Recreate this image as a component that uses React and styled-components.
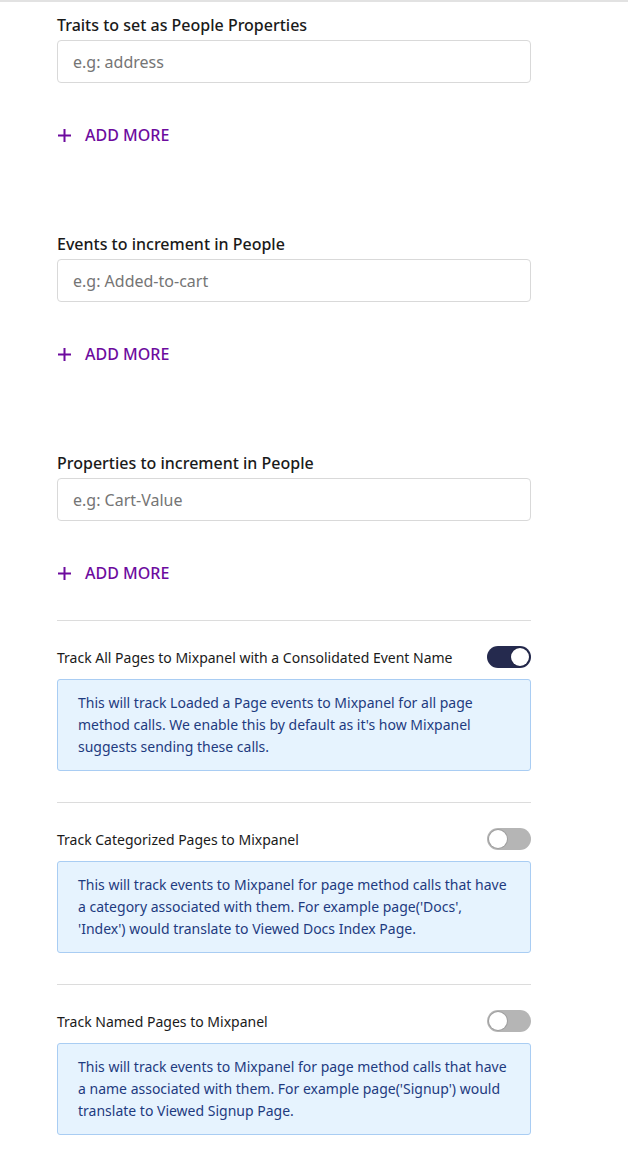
import React from "react";
import styled, { createGlobalStyle } from "styled-components";

const GlobalStyle = createGlobalStyle`
  body {
    margin: 0;
    background: #fff;
    font-family: "Noto Sans", "Open Sans", sans-serif;
  }
`;

const Page = styled.div`
  width: 628px;
  min-height: 1150px;
  border-top: 2px solid #e2e2e2;
  box-sizing: border-box;
`;

const Content = styled.div`
  width: 474px;
  margin-left: 57px;
  padding-top: 11px;
`;

const Field = styled.div`
  display: flex;
  flex-direction: column;
  margin-bottom: ${(p) => (p.$last ? "35px" : "85px")};
`;

const Label = styled.div`
  font-size: 16px;
  font-weight: 500;
  line-height: 24px;
  color: #1a1a1a;
  margin-bottom: 3px;
`;

const Input = styled.input`
  box-sizing: border-box;
  height: 43px;
  width: 100%;
  border: 1px solid #d9d9d9;
  border-radius: 4px;
  padding: 0 15px;
  font-family: inherit;
  font-size: 16px;
  color: #333;
  outline: none;
  &::placeholder {
    color: #757575;
  }
`;

const AddMore = styled.button`
  display: flex;
  align-items: center;
  gap: 13px;
  margin-top: 40px;
  padding: 0;
  border: none;
  background: none;
  color: #6d0b9e;
  font-family: inherit;
  font-size: 16px;
  font-weight: 500;
  line-height: 24px;
  cursor: pointer;
  height: 24px;
`;

const Divider = styled.hr`
  border: none;
  border-top: 1px solid #dcdcdc;
  margin: 0;
`;

const Setting = styled.div`
  padding: 25px 0 31px;
`;

const SettingRow = styled.div`
  display: flex;
  align-items: center;
  justify-content: space-between;
  height: 22px;
  margin-bottom: 11px;
`;

const SettingLabel = styled.div`
  font-size: 14px;
  color: #1a1a1a;
`;

const Toggle = styled.div`
  position: relative;
  width: 44px;
  height: 22px;
  border-radius: 11px;
  background: ${(p) => (p.$on ? "#252a4e" : "#b5b5b5")};
  box-sizing: border-box;
`;

const Knob = styled.div`
  position: absolute;
  top: 2px;
  left: ${(p) => (p.$on ? "24px" : "2px")};
  width: 18px;
  height: 18px;
  border-radius: 50%;
  background: #fff;
  box-shadow: 0 0 0 1px rgba(0, 0, 0, 0.12);
`;

const InfoBox = styled.div`
  box-sizing: border-box;
  background: #e6f3fe;
  border: 1px solid #a9cdf3;
  border-radius: 3px;
  padding: 12px 20px 12px;
  font-size: 14px;
  line-height: 22px;
  color: #1e3b80;
`;

const PlusIcon = () => (
  <svg width="15" height="15" viewBox="0 0 15 15">
    <path d="M7.5 1v13M1 7.5h13" stroke="#6d0b9e" strokeWidth="2" />
  </svg>
);

const fields = [
  { label: "Traits to set as People Properties", placeholder: "e.g: address" },
  { label: "Events to increment in People", placeholder: "e.g: Added-to-cart" },
  { label: "Properties to increment in People", placeholder: "e.g: Cart-Value" },
];

const settings = [
  {
    label: "Track All Pages to Mixpanel with a Consolidated Event Name",
    on: true,
    text: "This will track Loaded a Page events to Mixpanel for all page method calls. We enable this by default as it's how Mixpanel suggests sending these calls.",
  },
  {
    label: "Track Categorized Pages to Mixpanel",
    on: false,
    text: "This will track events to Mixpanel for page method calls that have a category associated with them. For example page('Docs', 'Index') would translate to Viewed Docs Index Page.",
  },
  {
    label: "Track Named Pages to Mixpanel",
    on: false,
    text: "This will track events to Mixpanel for page method calls that have a name associated with them. For example page('Signup') would translate to Viewed Signup Page.",
  },
];

const ListField = ({ label, placeholder, last }) => (
  <Field $last={last}>
    <Label>{label}</Label>
    <Input placeholder={placeholder} />
    <AddMore>
      <PlusIcon />
      ADD MORE
    </AddMore>
  </Field>
);

const App = () => {
  return (
    <Page>
      <GlobalStyle />
      <Content>
        {fields.map((f, i) => (
          <ListField key={f.label} {...f} last={i === fields.length - 1} />
        ))}
        {settings.map((s) => (
          <React.Fragment key={s.label}>
            <Divider />
            <Setting>
              <SettingRow>
                <SettingLabel>{s.label}</SettingLabel>
                <Toggle $on={s.on}>
                  <Knob $on={s.on} />
                </Toggle>
              </SettingRow>
              <InfoBox>{s.text}</InfoBox>
            </Setting>
          </React.Fragment>
        ))}
      </Content>
    </Page>
  );
};

export default App;
